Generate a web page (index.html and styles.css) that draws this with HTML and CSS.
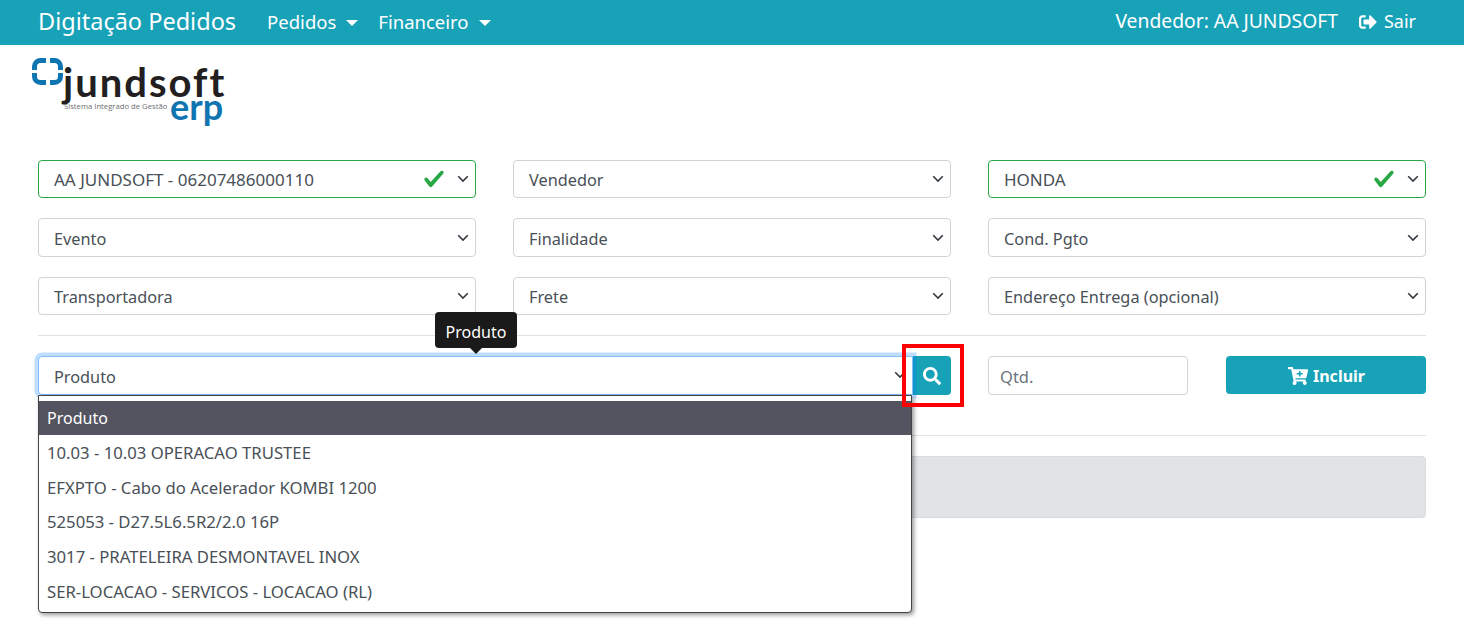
FILE: index.html
```html
<!DOCTYPE html>
<html lang="en">
<head>
    <meta charset="UTF-8">
    <meta name="viewport" content="width=device-width, initial-scale=1.0">
    <title>Digitação Pedidos</title>
    <link rel="stylesheet" href="styles.css">
</head>
<body>
    <nav class="navbar">
        <a class="brand">Digitação Pedidos</a>
        <a class="nav-link">Pedidos<span class="caret"></span></a>
        <a class="nav-link">Financeiro<span class="caret"></span></a>
        <div class="nav-right">
            <span class="nav-user">Vendedor: AA JUNDSOFT</span>
            <a class="nav-exit">
                <svg class="icon-exit" viewBox="0 0 512 512"><path fill="currentColor" d="M497 273L329 441c-15 15-41 4.5-41-17v-96H152c-13.3 0-24-10.7-24-24v-96c0-13.3 10.7-24 24-24h136V88c0-21.4 25.9-32 41-17l168 168c9.3 9.4 9.3 24.6 0 34zM192 436v-40c0-6.6-5.4-12-12-12H96c-17.7 0-32-14.3-32-32V160c0-17.7 14.3-32 32-32h84c6.6 0 12-5.4 12-12V76c0-6.6-5.4-12-12-12H96c-53 0-96 43-96 96v192c0 53 43 96 96 96h84c6.6 0 12-5.4 12-12z"></path></svg>
                Sair
            </a>
        </div>
    </nav>

    <div class="logo">
        <svg width="200" height="84" viewBox="0 0 200 84">
            <g fill="none" stroke="#0f75b0" stroke-width="5">
                <path d="M4.500 16V12.500a6 6 0 0 1 6-6H16"></path>
                <path d="M20 6.500h4.500a6 6 0 0 1 6 6V16"></path>
                <path d="M30.500 19v3.500a6 6 0 0 1-6 6H20"></path>
                <path d="M16 28.500H10.500a6 6 0 0 1-6-6V19"></path>
            </g>
            <text class="logo-name" x="33" y="43">jundsoft</text>
            <text class="logo-slogan" x="34" y="55">Sistema Integrado de Gestão</text>
            <text class="logo-erp" x="140" y="66">erp</text>
        </svg>
    </div>

    <main class="container">
        <div class="form-grid">
            <select class="custom-select is-valid"><option>AA JUNDSOFT - 06207486000110</option></select>
            <select class="custom-select"><option>Vendedor</option></select>
            <select class="custom-select is-valid"><option>HONDA</option></select>
            <select class="custom-select"><option>Evento</option></select>
            <select class="custom-select"><option>Finalidade</option></select>
            <select class="custom-select"><option>Cond. Pgto</option></select>
            <select class="custom-select"><option>Transportadora</option></select>
            <select class="custom-select"><option>Frete</option></select>
            <select class="custom-select"><option>Endereço Entrega (opcional)</option></select>
        </div>

        <hr class="divider">

        <div class="product-row">
            <div class="product-group">
                <select class="custom-select product-select"><option>Produto</option></select>
                <button class="btn btn-search" type="button">
                    <svg class="icon-search" viewBox="0 0 512 512"><path fill="currentColor" d="M505 442.700L405.300 343c-4.500-4.500-10.600-7-17-7H372c27.600-35.300 44-79.700 44-128C416 93.100 322.900 0 208 0S0 93.100 0 208s93.100 208 208 208c48.300 0 92.700-16.400 128-44v16.300c0 6.400 2.500 12.500 7 17l99.700 99.700c9.400 9.400 24.600 9.400 33.900 0l28.300-28.300c9.400-9.400 9.400-24.600.1-34zM208 336c-70.700 0-128-57.200-128-128 0-70.700 57.200-128 128-128 70.700 0 128 57.200 128 128 0 70.700-57.200 128-128 128z"></path></svg>
                </button>
                <div class="tooltip">Produto</div>
                <ul class="dropdown">
                    <li class="selected">Produto</li>
                    <li>10.03 - 10.03 OPERACAO TRUSTEE</li>
                    <li>EFXPTO - Cabo do Acelerador KOMBI 1200</li>
                    <li>525053 - D27.5L6.5R2/2.0 16P</li>
                    <li>3017 - PRATELEIRA DESMONTAVEL INOX</li>
                    <li>SER-LOCACAO - SERVICOS - LOCACAO (RL)</li>
                </ul>
                <div class="highlight-box"></div>
            </div>
            <div class="qty-group">
                <input class="form-control" type="text" placeholder="Qtd.">
                <button class="btn btn-add" type="button">
                    <svg class="icon-cart" viewBox="0 0 576 512"><path fill="currentColor" d="M504.717 320H211.572l6.545 32h268.418c15.401 0 26.816 14.301 23.403 29.319l-5.517 24.276C523.112 414.668 536 433.828 536 456c0 31.202-25.519 56.444-56.824 55.994-29.823-.429-54.350-24.631-55.155-54.447-.44-16.287 6.085-31.049 16.803-41.548H231.176C241.553 426.165 248 440.326 248 456c0 31.813-26.528 57.431-58.670 55.938-28.540-1.325-51.751-24.385-53.251-52.917-1.158-22.034 10.436-41.455 28.051-51.586L93.883 64H24C10.745 64 0 53.255 0 40V24C0 10.745 10.745 0 24 0h102.529c11.401 0 21.228 8.021 23.513 19.190L159.208 64H551.990c15.401 0 26.816 14.301 23.403 29.319l-47.273 208C525.637 312.246 515.923 320 504.717 320zM408 168h-48v-40c0-8.837-7.163-16-16-16h-16c-8.837 0-16 7.163-16 16v40h-48c-8.837 0-16 7.163-16 16v16c0 8.837 7.163 16 16 16h48v40c0 8.837 7.163 16 16 16h16c8.837 0 16-7.163 16-16v-40h48c8.837 0 16-7.163 16-16v-16c0-8.837-7.163-16-16-16z"></path></svg>
                    Incluir
                </button>
            </div>
        </div>

        <hr class="divider divider-low">

        <div class="alert"></div>
    </main>
</body>
</html>
```

FILE: styles.css
```css
* {
    box-sizing: border-box;
}

body {
    margin: 0;
    min-height: 635px;
    font-family: "Noto Sans", "Open Sans", sans-serif;
    font-size: 16px;
    line-height: 1.5;
    color: #495057;
    background-color: #fff;
}

.navbar {
    display: flex;
    align-items: center;
    height: 45px;
    padding: 0 48px 2px 38px;
    background-color: #17a2b8;
    color: #fff;
}

.brand {
    font-size: 23.500px;
    margin-right: 31px;
}

.nav-link {
    font-size: 18.500px;
    margin-right: 20px;
}

.caret {
    display: inline-block;
    margin-left: 10px;
    vertical-align: 3px;
    border-top: 6px solid #fff;
    border-left: 6px solid transparent;
    border-right: 6px solid transparent;
}

.nav-right {
    display: flex;
    align-items: center;
    margin-left: auto;
    font-size: 18px;
}

.nav-user {
    font-size: 19.300px;
}

.nav-exit {
    display: flex;
    align-items: center;
    margin-left: 20px;
}

.icon-exit {
    width: 20px;
    height: 18px;
    margin-right: 6px;
}

.logo {
    height: 115px;
    padding: 9px 0 0 30px;
}

.logo svg {
    display: block;
}

.logo-name {
    font-family: "Lato", sans-serif;
    font-size: 40px;
    font-weight: 700;
    letter-spacing: 2px;
    fill: #231f20;
}

.logo-slogan {
    font-family: "Open Sans", sans-serif;
    font-size: 7.700px;
    fill: #6d6e71;
}

.logo-erp {
    font-family: "Lato", sans-serif;
    font-size: 36px;
    font-weight: 700;
    fill: #0f75b0;
}

.container {
    padding: 0 38px;
}

.form-grid {
    display: grid;
    grid-template-columns: repeat(3, 1fr);
    column-gap: 37px;
    row-gap: 20px;
}

.custom-select {
    display: block;
    width: 100%;
    height: 38.400px;
    padding: 7px 36px 5px 15px;
    font-family: inherit;
    font-size: 16.300px;
    color: #495057;
    background: #fff url("data:image/svg+xml,%3csvg xmlns='http://www.w3.org/2000/svg' width='4' height='5' viewBox='0 0 4 5'%3e%3cpath fill='none' stroke='%23343a40' stroke-width='.4' d='M.8 1.800L2 3l1.200-1.200'/%3e%3c/svg%3e") no-repeat right 4px center;
    background-size: 16px 20px;
    border: 1px solid #ced4da;
    border-radius: 4px;
    appearance: none;
    -webkit-appearance: none;
}

.custom-select.is-valid {
    padding-top: 6px;
    padding-bottom: 6px;
    font-size: 17px;
    border-color: #28a745;
    background-image: url("data:image/svg+xml,%3csvg xmlns='http://www.w3.org/2000/svg' width='4' height='5' viewBox='0 0 4 5'%3e%3cpath fill='none' stroke='%23343a40' stroke-width='.4' d='M.8 1.800L2 3l1.200-1.200'/%3e%3c/svg%3e"), url("data:image/svg+xml,%3csvg xmlns='http://www.w3.org/2000/svg' width='8' height='8' viewBox='0 0 8 8'%3e%3cpath fill='%2328a745' d='M2.300 6.730L.6 4.530c-.4-1.040.46-1.400 1.100-.8l1.100 1.400 3.400-3.800c.6-.63 1.600-.27 1.200.7l-4 4.600c-.43.500-.8.400-1.100.1z'/%3e%3c/svg%3e");
    background-repeat: no-repeat, no-repeat;
    background-position: right 4px center, right 30px center;
    background-size: 16px 20px, 22px 22px;
}

.divider {
    margin: 20px 0;
    border: 0;
    border-top: 1px solid #dfe2e5;
}

.divider-low {
    margin: 40px 0 20px;
}

.product-row {
    display: grid;
    grid-template-columns: repeat(3, 1fr);
    column-gap: 37px;
}

.product-group {
    position: relative;
    display: flex;
    grid-column: span 2;
}

.product-select {
    position: relative;
    z-index: 1;
    flex: 1;
    padding-top: 8px;
    padding-bottom: 4px;
    border-color: #80bdff;
    border-radius: 4px 0 0 4px;
    box-shadow: 0 0 0 3.500px rgba(0, 123, 255, 0.25);
}

.btn {
    display: flex;
    align-items: center;
    justify-content: center;
    border: 0;
    border-radius: 4px;
    font-family: inherit;
    font-size: 16px;
    font-weight: 700;
    color: #fff;
    background-color: #17a2b8;
}

.btn-search {
    width: 38px;
    height: 39px;
    padding: 0;
    border-radius: 0 4px 4px 0;
}

.icon-search {
    width: 18px;
    height: 18px;
}

.tooltip {
    position: absolute;
    z-index: 2;
    left: 397px;
    top: -44px;
    width: 82px;
    height: 36px;
    padding-top: 2px;
    border-radius: 4px;
    background-color: #1a1a1a;
    color: #fff;
    text-align: center;
    line-height: 36px;
}

.tooltip::after {
    content: "";
    position: absolute;
    left: 35px;
    top: 36px;
    border-top: 6px solid #1a1a1a;
    border-left: 6px solid transparent;
    border-right: 6px solid transparent;
}

.dropdown {
    position: absolute;
    z-index: 2;
    left: 0;
    top: 38.400px;
    width: 874px;
    margin: 0;
    padding: 5px 0 4px;
    list-style: none;
    font-size: 16.700px;
    background-color: #fff;
    border: 1px solid #444;
    border-radius: 0 0 4px 4px;
    box-shadow: 2px 2px 4px rgba(0, 0, 0, 0.4);
}

.dropdown li {
    height: 34.600px;
    padding: 0 8px;
    line-height: 35.600px;
}

.dropdown .selected {
    font-size: 16px;
    background-color: #545460;
    color: #fff;
}

.highlight-box {
    position: absolute;
    z-index: 3;
    left: 864px;
    top: -12px;
    width: 62px;
    height: 63px;
    border: 4px solid #f00;
}

.qty-group {
    display: flex;
    justify-content: space-between;
}

.form-control {
    width: 200px;
    height: 39px;
    padding: 7px 11px 5px;
    font-family: inherit;
    font-size: 16.500px;
    border: 1px solid #ced4da;
    border-radius: 4px;
}

.form-control::placeholder {
    color: #6c757d;
}

.btn-add {
    width: 200px;
    height: 38px;
    padding: 1px 0 0;
}

.icon-cart {
    width: 22px;
    height: 18px;
    margin-right: 4px;
}

.alert {
    height: 62px;
    background-color: #e1e3e5;
    border: 1px solid #d9dbdd;
    border-radius: 4px;
}
```
